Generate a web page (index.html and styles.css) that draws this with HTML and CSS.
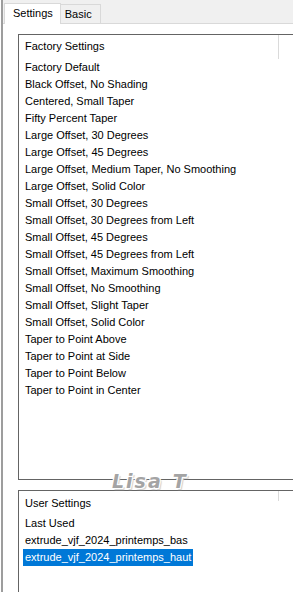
FILE: index.html
```html
<!DOCTYPE html>
<html lang="en">
<head>
<meta charset="UTF-8">
<meta name="viewport" content="width=device-width, initial-scale=1.0">
<title>Extrude Settings</title>
<link rel="stylesheet" href="styles.css">
</head>
<body>

<div class="window">
  <div class="tabs">
    <div class="tab active">Settings</div>
    <div class="tab">Basic</div>
  </div>

  <div class="content">
    <div class="group factory">
      <div class="group-title">Factory Settings</div>
      <ul class="list">
        <li>Factory Default</li>
        <li>Black Offset, No Shading</li>
        <li>Centered, Small Taper</li>
        <li>Fifty Percent Taper</li>
        <li>Large Offset, 30 Degrees</li>
        <li>Large Offset, 45 Degrees</li>
        <li>Large Offset, Medium Taper, No Smoothing</li>
        <li>Large Offset, Solid Color</li>
        <li>Small Offset, 30 Degrees</li>
        <li>Small Offset, 30 Degrees from Left</li>
        <li>Small Offset, 45 Degrees</li>
        <li>Small Offset, 45 Degrees from Left</li>
        <li>Small Offset, Maximum Smoothing</li>
        <li>Small Offset, No Smoothing</li>
        <li>Small Offset, Slight Taper</li>
        <li>Small Offset, Solid Color</li>
        <li>Taper to Point Above</li>
        <li>Taper to Point at Side</li>
        <li>Taper to Point Below</li>
        <li>Taper to Point in Center</li>
      </ul>
    </div>

    <div class="group user">
      <div class="group-title">User Settings</div>
      <ul class="list">
        <li>Last Used</li>
        <li>extrude_vjf_2024_printemps_bas</li>
        <li class="selected">extrude_vjf_2024_printemps_haut</li>
      </ul>
    </div>

    <div class="watermark">Lisa<span class="gap"></span>T</div>
  </div>
</div>

</body>
</html>
```

FILE: styles.css
```css
html, body {
  margin: 0;
  padding: 0;
  background: #fff;
}
body {
  font-family: "Liberation Sans", Arial, sans-serif;
  font-size: 11px;
  color: #000;
  width: 293px;
  height: 592px;
  overflow: hidden;
}
.window {
  height: 592px;
  border-left: 2px solid #9d9d9d;
  margin-left: 1px;
  background: #fff;
  overflow: hidden;
}
.tabs {
  display: flex;
  align-items: flex-end;
  height: 23px;
  padding-left: 1px;
  background: #f0f0f0;
  border-bottom: 1px solid #d9d9d9;
}
.tab {
  height: 18px;
  line-height: 18px;
  padding: 0 8px 0 4px;
  background: #f0f0f0;
  border: 1px solid #d9d9d9;
  border-bottom: none;
}
.tab.active {
  height: 20px;
  line-height: 18px;
  padding: 0 7px 0 8px;
  background: #fff;
  margin-bottom: -1px;
}
.tab + .tab {
  border-left: none;
}
.content {
  position: relative;
  padding: 10px 0 0 15px;
}
.group {
  position: relative;
  border: 1px solid #646464;
  border-right: none;
  margin-right: -20px;
  padding: 3px 0 0 6px;
}
.group::after {
  content: "";
  position: absolute;
  left: 259px;
  top: 0;
  width: 1px;
  background: #dadada;
}
.factory {
  height: 441px;
}
.factory::after {
  height: 24px;
}
.user {
  margin-top: 10px;
  height: 120px;
  padding-top: 4px;
}
.user::after {
  height: 10px;
}
.group-title {
  line-height: 17px;
  margin-bottom: 4px;
}
.user .group-title {
  margin-bottom: 3px;
}
.list {
  list-style: none;
  margin: 0;
  padding: 0;
}
.list li {
  line-height: 17px;
  height: 17px;
  white-space: nowrap;
}
.list li.selected {
  display: inline-block;
  background: #0078d7;
  color: #fff;
  margin-left: -2px;
  padding: 0 2px 0 2px;
}
.watermark {
  position: absolute;
  left: 109px;
  top: 446px;
  font-family: "DejaVu Sans", sans-serif;
  font-weight: bold;
  font-style: italic;
  font-size: 19px;
  letter-spacing: 2px;
  color: #a4a4a4;
  text-shadow: 1px 1px 0 #fff, -1px -1px 0 #fff, 1px -1px 0 #fff, -1px 1px 0 #fff, 2px 2px 1px #cfcfcf;
}
.watermark .gap {
  display: inline-block;
  width: 10px;
}
```
